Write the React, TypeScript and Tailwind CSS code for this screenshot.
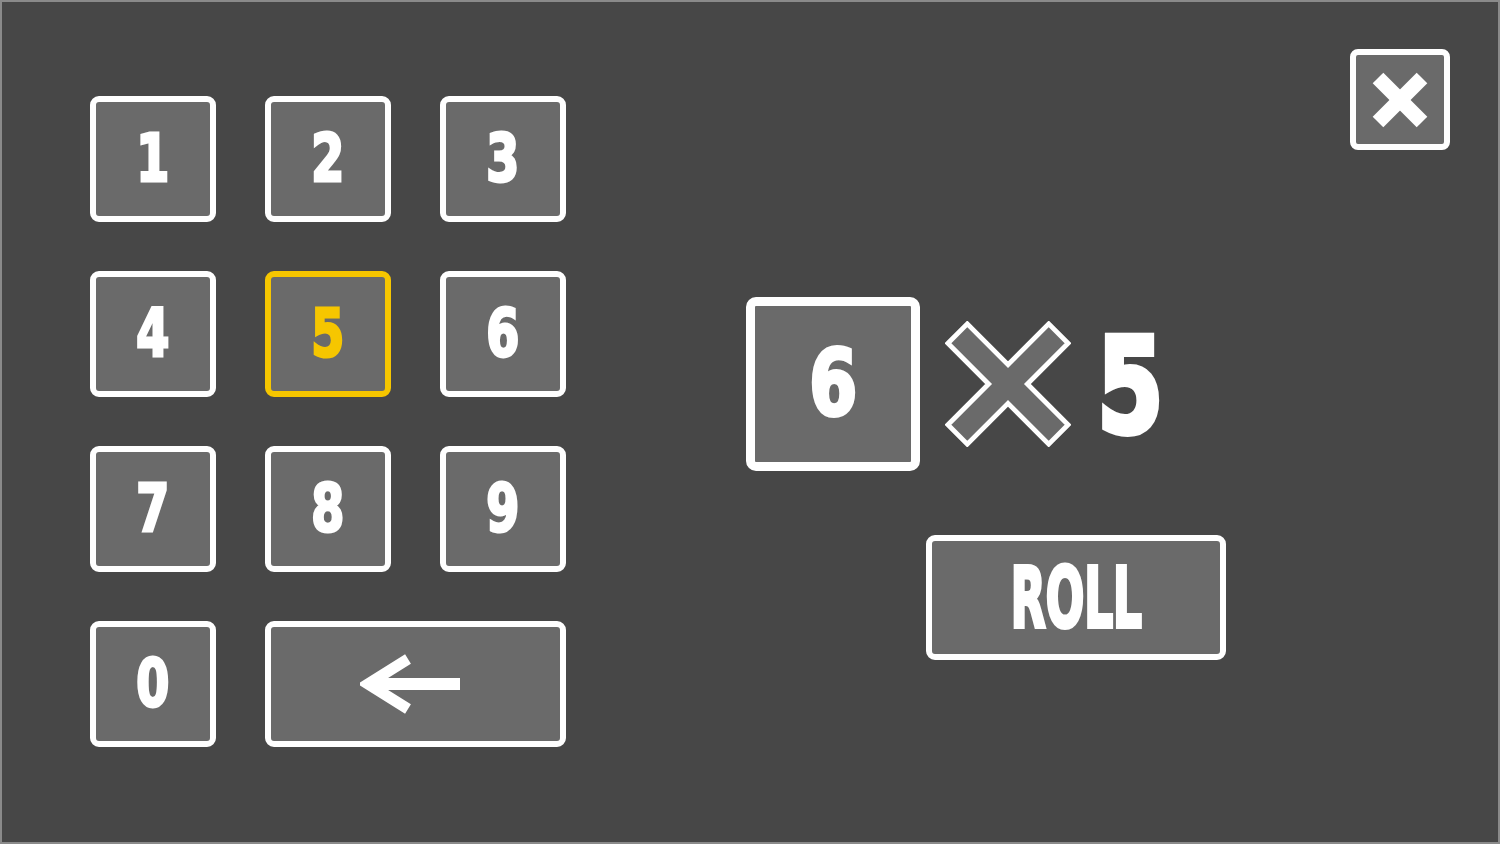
import { ReactNode } from 'react'

const FONT = "font-['DejaVu_Sans_Condensed','DejaVu_Sans',sans-serif] font-bold"

function Key({ children, active, wide }: { children: ReactNode; active?: boolean; wide?: boolean }) {
  return (
    <div
      className={`flex h-[126px] items-center justify-center rounded-[9px] border-[6px] bg-[#6a6a6a] ${wide ? 'col-span-2' : ''} ${
        active ? 'border-[#f6c600] text-[#f6c600]' : 'border-white text-white'
      }`}
    >
      {children}
    </div>
  )
}

function Digit({ d }: { d: string }) {
  return (
    <span className={`${FONT} inline-block scale-x-[0.8] text-[66px] leading-none [-webkit-text-stroke:3px_currentcolor]`}>
      {d}
    </span>
  )
}

function Backspace() {
  return (
    <svg width="100" height="60" viewBox="0 0 100 60" className="mr-[12px]">
      <rect x="12" y="24" width="88" height="12" fill="white" />
      <polyline points="48,5 8,30 48,55" fill="none" stroke="white" strokeWidth="11" strokeLinejoin="miter" />
    </svg>
  )
}

function TimesOutline() {
  const S = 124
  const d = 10
  const h = S / 2
  const pts = [
    [2 * d, 0], [h, h - 2 * d], [S - 2 * d, 0], [S, 2 * d], [h + 2 * d, h], [S, S - 2 * d],
    [S - 2 * d, S], [h, h + 2 * d], [2 * d, S], [0, S - 2 * d], [h - 2 * d, h], [0, 2 * d],
  ]
  return (
    <svg width="126" height="126" viewBox="-3 -3 130 130">
      <polygon points={pts.map(p => p.join(',')).join(' ')} fill="#6a6a6a" stroke="white" strokeWidth="5" strokeLinejoin="miter" />
    </svg>
  )
}

export default function App() {
  const keys = ['1', '2', '3', '4', '5', '6', '7', '8', '9']
  return (
    <div className="flex h-[844px] w-[1500px] border-2 border-[#8a8a8a] bg-[#474747]">
      <div className="ml-[88px] mt-[94px] grid h-fit grid-cols-[126px_126px_126px] gap-[49px]">
        {keys.map(k => (
          <Key key={k} active={k === '5'}>
            <Digit d={k} />
          </Key>
        ))}
        <Key><Digit d="0" /></Key>
        <Key wide><Backspace /></Key>
      </div>

      <div className="flex flex-1 flex-col">
        <div className="mr-[48px] mt-[47px] flex h-[101px] w-[100px] items-center justify-center self-end rounded-[8px] border-[6px] border-white bg-[#6a6a6a]">
          <svg width="56" height="56" viewBox="0 0 56 56">
            <line x1="6" y1="6" x2="50" y2="50" stroke="white" strokeWidth="15" />
            <line x1="50" y1="6" x2="6" y2="50" stroke="white" strokeWidth="15" />
          </svg>
        </div>

        <div className="ml-[180px] mt-[147px] flex items-center">
          <div className="flex h-[174px] w-[174px] items-center justify-center rounded-[10px] border-[9px] border-white bg-[#6a6a6a] text-white">
            <span className={`${FONT} inline-block scale-x-[0.85] text-[90px] leading-none [-webkit-text-stroke:4px_currentcolor]`}>6</span>
          </div>
          <div className="ml-[25px]">
            <TimesOutline />
          </div>
          <span className={`${FONT} ml-[18px] mt-[4px] inline-block scale-x-[0.8] text-[132px] leading-none text-white [-webkit-text-stroke:6px_currentcolor]`}>
            5
          </span>
        </div>

        <div className="ml-[360px] mt-[64px] flex h-[125px] w-[300px] items-center justify-center rounded-[9px] border-[6px] border-white bg-[#6a6a6a] text-white">
          <span className={`${FONT} inline-block scale-x-[0.6] text-[84px] leading-none [-webkit-text-stroke:4px_currentcolor]`}>ROLL</span>
        </div>
      </div>
    </div>
  )
}
